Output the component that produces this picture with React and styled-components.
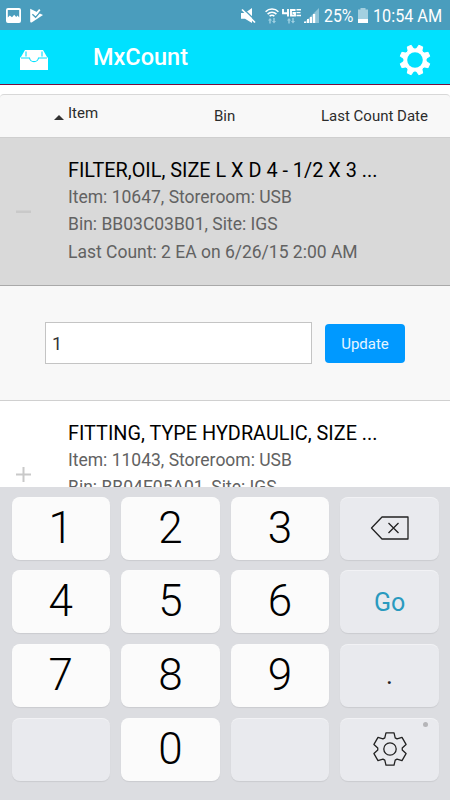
import styled, { createGlobalStyle } from "styled-components"

const GlobalStyle = createGlobalStyle`
    *{
        box-sizing:border-box;
    }
    body{
        margin:0;
        font-family:Roboto, "Liberation Sans", sans-serif;
        background-color:white;
        overflow:hidden;
    }
`;
const Screen = styled.div`
    width:450px;
    height:800px;
    display:flex;
    flex-direction:column;
    overflow:hidden;
`;

/* status bar */
const StatusBar = styled.div`
    height:30px;
    flex-shrink:0;
    display:flex;
    align-items:center;
    justify-content:space-between;
    padding:0 7px 0 6px;
    background-color:#4a9dbd;
    color:white;
`;
const StatusGroup = styled.div`
    display:flex;
    align-items:center;
    gap:${(props) => props.$gap || 0}px;

    svg{
        margin-top:1px;
    }
`;
const StatusText = styled.span`
    display:block;
    width:${(props) => props.$width}px;
    margin-left:${(props) => props.$gap}px;
    font-size:18px;
    line-height:30px;
    padding-top:2px;
    white-space:nowrap;
    transform:scaleX(${(props) => props.$squeeze});
    transform-origin:left center;
`;

/* app header */
const Header = styled.header`
    height:55px;
    flex-shrink:0;
    display:flex;
    align-items:center;
    padding:0 19px 0 20px;
    background-color:#00e1ff;
    border-bottom:1px solid #7a0f3c;
`;
const Title = styled.h1`
    flex:1;
    margin:0 0 0 45px;
    font-size:23.5px;
    font-weight:500;
    line-height:54px;
    color:white;
`;
const HeaderIcon = styled.div`
    display:flex;
    padding-top:${(props) => props.$drop}px;
`;

/* list */
const List = styled.main`
    height:402px;
    flex-shrink:0;
    padding-top:9px;
    overflow:hidden;
`;
const Columns = styled.div`
    height:44px;
    display:flex;
    align-items:center;
    padding:0 22px 0 54px;
    border-top:1px solid #d8d8d8;
    border-bottom:1px solid #cfcfcf;
    border-radius:4px 4px 0 0;
    background-color:#f8f8f8;
    color:#2c2c2c;
    font-size:15px;
`;
const Column = styled.span`
    display:flex;
    width:${(props) => props.$width || "auto"};
    margin-top:${(props) => props.$shift || 0}px;
    white-space:nowrap;
`;
const SortArrow = styled.span`
    align-self:flex-end;
    margin:0 4px 2px 0;
    border-left:5px solid transparent;
    border-right:5px solid transparent;
    border-bottom:5px solid #333;
`;
const Row = styled.div`
    height:148px;
    display:flex;
    background-color:${(props) => (props.$active ? "#d9d9d9" : "white")};
    border-bottom:1px solid #a9a9a9;
`;
const Toggle = styled.div`
    width:68px;
    padding-left:16px;
    display:flex;
    align-items:center;
    color:#c9c9c9;
`;
const ItemName = styled.div`
    padding-top:19px;
    font-size:19.85px;
    line-height:27px;
    color:#000;
`;
const ItemLine = styled.div`
    font-size:17.5px;
    line-height:27.3px;
    color:#626262;
`;
const Form = styled.form`
    height:115px;
    display:flex;
    align-items:center;
    gap:13px;
    padding:0 45px;
    background-color:#f8f8f8;
    border-bottom:1px solid #d0d0d0;
`;
const Input = styled.input`
    width:267px;
    height:42px;
    padding:0 6px;
    border:1px solid #c4c4c4;
    border-radius:0;
    background-color:white;
    color:#333;
    font:18px Roboto, sans-serif;
    outline:none;
`;
const Button = styled.button`
    width:80px;
    height:39px;
    padding:1px 0 0;
    border:none;
    border-radius:4px;
    background-color:#0099ff;
    color:#e6f4ff;
    font:15px Roboto, sans-serif;
`;

/* keyboard */
const Keyboard = styled.div`
    height:313px;
    flex-shrink:0;
    display:grid;
    grid-template-columns:repeat(4, 98.5px);
    grid-auto-rows:63px;
    gap:10.7px 11.1px;
    padding:9.5px 11.5px;
    background-color:#dcdde1;
`;
const Key = styled.div`
    position:relative;
    display:flex;
    align-items:center;
    justify-content:center;
    border-radius:8px;
    background-color:${(props) => (props.$plain ? "#e9eaee" : "#fbfbfb")};
    box-shadow:0 1px 1px rgba(0, 0, 0, 0.08), inset 0 1px 0 rgba(255, 255, 255, 0.4);
    color:black;
    font-size:44px;
    font-weight:300;
    line-height:63px;
`;
const GoLabel = styled.span`
    font-size:25px;
    font-weight:400;
    color:#2a9abf;
    padding-top:2px;
`;
const DotLabel = styled.span`
    font-size:26px;
    font-weight:400;
    color:#222;
    padding-top:1px;
`;
const Hint = styled.span`
    position:absolute;
    top:4.5px;
    right:10.5px;
    width:5px;
    height:5px;
    border-radius:50%;
    background-color:#b5b5b8;
`;

// corner points of a cog, listed as [angle offset, radius] around each tooth
const cog = (teeth, start, corners) => {
    const points = [];
    for (let i = 0; i < teeth; i++) {
        corners.forEach(([offset, r]) => {
            const a = ((start + (360 / teeth) * i + offset) * Math.PI) / 180;
            points.push(`${(r * Math.sin(a)).toFixed(2)},${(-r * Math.cos(a)).toFixed(2)}`);
        });
    }
    return points.join(" ");
};

const PictureIcon = () => (
    <svg width="15" height="15" viewBox="0 0 15 15">
        <path fillRule="evenodd" fill="white" d="M2 0h11a2 2 0 0 1 2 2v11a2 2 0 0 1-2 2H2a2 2 0 0 1-2-2V2a2 2 0 0 1 2-2zM1.8 2v7.5l2-2 2.2 1.8 2.2-2.6 2 2.4 1.4-1.5 1.6 1.8V2z" />
    </svg>
);
const PlayIcon = () => (
    <svg width="15" height="15" viewBox="0 0 15 15">
        <path fill="white" d="M1.2.8 14 7 2.6 14.4a1 1 0 0 1-1.4-.8z" />
        <path fill="none" stroke="#4a9dbd" strokeWidth="1.4" d="M3.4 6.2 6.6 9.2 12.4 2.6" />
        <path fill="none" stroke="white" strokeWidth="1.8" d="M4.6 4.6 6.6 6.6 10.8 1.6" />
    </svg>
);
const MuteIcon = () => (
    <svg width="15" height="16" viewBox="0 0 15 16">
        <path fill="white" d="M0 5h4l7-5v15L4 10.8H0z" />
        <path stroke="#4a9dbd" strokeWidth="1.4" d="M2.5 1 15 13" />
        <path stroke="white" strokeWidth="1.7" d="M1 1.5 14 14.5" />
    </svg>
);
// up and down data arrows under a network icon
const Arrows = ({ x }) => (
    <g fill="#9fd0e2" transform={`translate(${x} 10)`}>
        <path d="M1.3 5.5V2.400H0L2 0l2 2.400H2.700v3.100z" />
        <path d="M5.3 0v3.100H4L6 5.500l2-2.400H6.700V0z" />
    </g>
);
const WifiIcon = () => (
    <svg width="14" height="16" viewBox="0 0 14 16">
        <g fill="none" stroke="white" strokeWidth="1.6">
            <path d="M.6 3.7a9 9 0 0 1 12.8 0" />
            <path d="M2.6 6.1a6.2 6.2 0 0 1 8.8 0" />
            <path d="M4.6 8.3a3.4 3.4 0 0 1 4.8 0" />
        </g>
        <Arrows x={3} />
    </svg>
);
const LteIcon = () => (
    <svg width="19" height="16" viewBox="0 0 19 16">
        <g fill="none" stroke="white" strokeWidth="1.9">
            <path d="M1 1v4.2h6M6 1v7.5" />
            <path d="M13.5 2H9v5.5h4V5h-2.5" />
        </g>
        <g stroke="white" strokeWidth="1.4">
            <path d="M14.5 1.8H19M14.5 4.6h4M14.5 7.5H19" />
        </g>
        <Arrows x={5} />
    </svg>
);
const SignalIcon = () => (
    <svg width="15" height="15" viewBox="0 0 15 15">
        <path fill="#8dc3d8" d="M15 0v15H0z" />
        <path fill="white" d="M0 13.5h2V15H0zM3 11h2v4H3zM6 9h2v6H6zM9 6h2.2v9H9z" />
    </svg>
);
const BatteryIcon = () => (
    <svg width="10" height="15" viewBox="0 0 10 15">
        <path fill="#a3d0e0" d="M2.5 0h5v1.5H10V15H0V1.5h2.5z" />
        <path fill="white" d="M0 11h10v4H0z" />
    </svg>
);
const InboxIcon = () => (
    <svg width="28" height="20" viewBox="0 0 28 20">
        <path fill="white" d="M5 0h18l4.3 7.5H28V20H0V7.5h.7z" />
        <path fill="none" stroke="#00e1ff" strokeWidth="1.1" d="M1 8h8.5a4.6 4.6 0 0 0 9 0H27M6 1.5v5M22 1.5v5" />
    </svg>
);
const HeaderGear = () => (
    <svg width="32" height="32" viewBox="-16 -16 32 32">
        <polygon fill="white" stroke="white" strokeWidth="1" strokeLinejoin="round" points={cog(8, 22.5, [[-13, 12], [-8, 15.2], [8, 15.2], [13, 12], [22.5, 10.8]])} />
        <circle r="7.8" fill="#00e1ff" />
    </svg>
);
const KeyGear = () => (
    <svg width="36" height="36" viewBox="-18 -18 36 36" fill="none" stroke="#222" strokeWidth="1.3" strokeLinejoin="round">
        <polygon points={cog(6, 0, [[-14, 16.7], [14, 16.7], [25, 12.3], [35, 12.3]])} />
        <circle r="6.2" />
    </svg>
);
const DeleteIcon = () => (
    <svg width="40" height="26" viewBox="0 0 40 26" fill="none" stroke="#222" strokeWidth="1.3" strokeLinejoin="round">
        <path d="M1.5 13 12 2h26v22H12z" />
        <path d="m18.5 8 10 10m0-10-10 10" />
    </svg>
);
const Minus = () => (
    <svg width="15" height="15" viewBox="0 0 15 15">
        <path fill="currentColor" d="M0 6.5h15v2.5H0z" />
    </svg>
);
const Plus = () => (
    <svg width="15" height="15" viewBox="0 0 15 15">
        <path fill="currentColor" d="M0 6.5h6.5V0h2v6.500H15v2H8.500V15h-2V8.500H0z" />
    </svg>
);

const App = () => {
    return (
        <Screen>
            <GlobalStyle />
            <StatusBar>
                <StatusGroup $gap={8}>
                    <PictureIcon />
                    <PlayIcon />
                </StatusGroup>
                <StatusGroup>
                    <StatusGroup $gap={9}>
                        <MuteIcon />
                        <StatusGroup $gap={3}>
                            <WifiIcon />
                            <LteIcon />
                            <SignalIcon />
                        </StatusGroup>
                    </StatusGroup>
                    <StatusText $width={34} $gap={5} $squeeze={0.88}>25%</StatusText>
                    <BatteryIcon />
                    <StatusText $width={70} $gap={5} $squeeze={0.9}>10:54 AM</StatusText>
                </StatusGroup>
            </StatusBar>
            <Header>
                <HeaderIcon $drop={6}>
                    <InboxIcon />
                </HeaderIcon>
                <Title>MxCount</Title>
                <HeaderIcon $drop={6}>
                    <HeaderGear />
                </HeaderIcon>
            </Header>
            <List>
                <Columns>
                    <Column $width="160px" $shift={-7}>
                        <SortArrow />
                        Item
                    </Column>
                    <Column $width="107px">Bin</Column>
                    <Column>Last Count Date</Column>
                </Columns>
                <Row $active>
                    <Toggle>
                        <Minus />
                    </Toggle>
                    <div>
                        <ItemName>FILTER,OIL, SIZE L X D 4 - 1/2 X 3 ...</ItemName>
                        <ItemLine>Item: 10647, Storeroom: USB</ItemLine>
                        <ItemLine>Bin: BB03C03B01, Site: IGS</ItemLine>
                        <ItemLine>Last Count: 2 EA on 6/26/15 2:00 AM</ItemLine>
                    </div>
                </Row>
                <Form>
                    <Input defaultValue="1" />
                    <Button type="button">Update</Button>
                </Form>
                <Row>
                    <Toggle>
                        <Plus />
                    </Toggle>
                    <div>
                        <ItemName>FITTING, TYPE HYDRAULIC, SIZE ...</ItemName>
                        <ItemLine>Item: 11043, Storeroom: USB</ItemLine>
                        <ItemLine>Bin: BB04E05A01, Site: IGS</ItemLine>
                    </div>
                </Row>
            </List>
            <Keyboard>
                <Key>1</Key>
                <Key>2</Key>
                <Key>3</Key>
                <Key $plain><DeleteIcon /></Key>
                <Key>4</Key>
                <Key>5</Key>
                <Key>6</Key>
                <Key $plain><GoLabel>Go</GoLabel></Key>
                <Key>7</Key>
                <Key>8</Key>
                <Key>9</Key>
                <Key $plain><DotLabel>.</DotLabel></Key>
                <Key $plain />
                <Key>0</Key>
                <Key $plain />
                <Key $plain>
                    <KeyGear />
                    <Hint />
                </Key>
            </Keyboard>
        </Screen>
    )
}

export default App
